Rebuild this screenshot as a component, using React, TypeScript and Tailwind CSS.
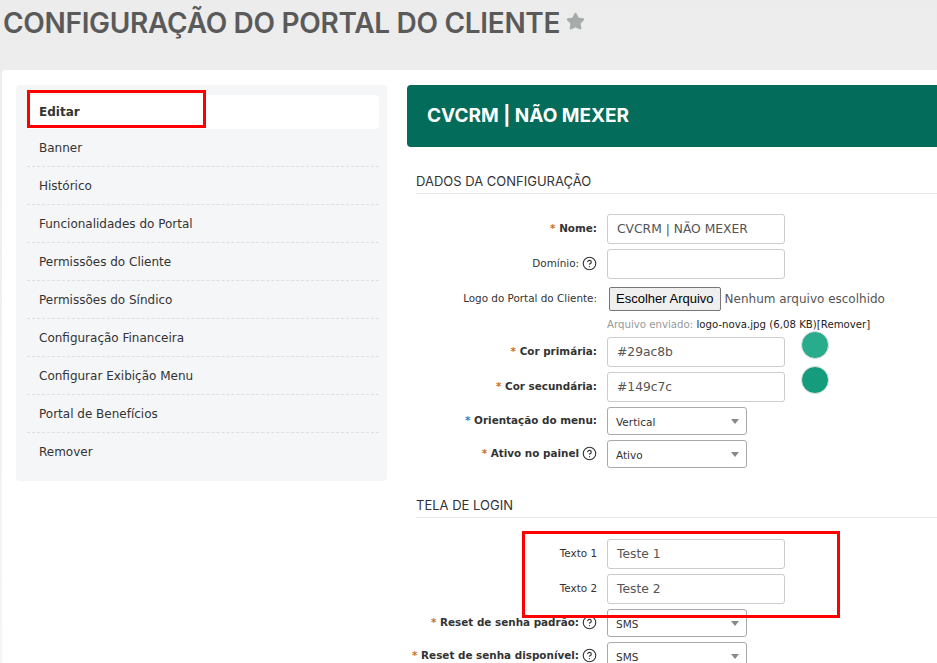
import { CircleHelp, Star } from "lucide-react";

const MENU = [
  "Banner",
  "Histórico",
  "Funcionalidades do Portal",
  "Permissões do Cliente",
  "Permissões do Síndico",
  "Configuração Financeira",
  "Configurar Exibição Menu",
  "Portal de Benefícios",
  "Remover",
];

const verdana = "font-['DejaVu_Sans',Verdana,sans-serif]";

function Req({ blue }: { blue?: boolean }) {
  return <span className={blue ? "text-[#3a7bd5]" : "text-[#c8702e]"}>* </span>;
}

function Help() {
  return <CircleHelp size={15} strokeWidth={1.8} className="ml-[3px] inline-block shrink-0 text-[#333]" />;
}

function Row({ label, children, className = "" }: { label: React.ReactNode; children: React.ReactNode; className?: string }) {
  return (
    <div className={`flex items-center ${className}`}>
      <div className={`flex w-[200px] shrink-0 items-center justify-end whitespace-nowrap pr-[10px] text-right text-[10.4px] text-[#333] ${verdana}`}>
        {label}
      </div>
      {children}
    </div>
  );
}

function TextInput({ value }: { value?: string }) {
  return (
    <div className={`flex h-[30px] w-[178px] items-center rounded-[3px] border border-[#ccc] bg-white px-[9px] text-[12.3px] text-[#555] ${verdana}`}>
      {value}
    </div>
  );
}

function Select({ value }: { value: string }) {
  return (
    <div className={`flex h-[28px] w-[140px] items-center justify-between rounded-[3px] border border-[#aaa] bg-white pl-[8px] pr-[7px] text-[10.5px] text-[#333] ${verdana}`}>
      <span className="pt-[3px]">{value}</span>
      <span className="h-0 w-0 border-l-[4px] border-r-[4px] border-t-[5px] border-l-transparent border-r-transparent border-t-[#888]" />
    </div>
  );
}

function SectionTitle({ children }: { children: React.ReactNode }) {
  return (
    <div className="ml-[9px] border-b border-[#e6e6e6] pb-[4px] font-['Inter',sans-serif] text-[13px] leading-[16px] text-[#333]">
      {children}
    </div>
  );
}

export default function App() {
  return (
    <div className="min-h-[663px] w-[937px] overflow-hidden bg-gradient-to-b from-[#ececec] to-[#f5f5f5]">
      <div className="flex h-[70px] items-start pl-[3px] pt-[2px]">
        <h1 className="font-['Inter',sans-serif] text-[28px] font-semibold tracking-[-0.3px] text-[#5a5a5a]">
          CONFIGURAÇÃO DO PORTAL DO CLIENTE
        </h1>
        <Star size={19} className="ml-[6px] mt-[10px] fill-[#a6abac] text-[#a6abac]" />
      </div>

      <div className="ml-[2px] flex min-h-[593px] gap-[20px] rounded-tl-[4px] bg-white pl-[14px] pt-[15px]">
        {/* Sidebar */}
        <div className="h-[396px] w-[371px] shrink-0 rounded-[4px] bg-[#f5f6f8] pl-[11px] pr-[8px] pt-[10px]">
          <div className={`relative flex h-[34px] items-center rounded-[4px] bg-white pl-[12px] text-[12px] font-bold text-[#333] ${verdana}`}>
            Editar
            <div className="absolute left-0 top-[-5px] h-[38px] w-[179px] border-[3px] border-[#ff0000]" />
          </div>
          {MENU.map((item, i) => (
            <div
              key={item}
              className={`flex h-[38px] items-center pl-[12px] text-[12px] text-[#333] ${verdana} ${i < MENU.length - 1 ? "border-b border-dashed border-[#dcdfe3]" : ""}`}
            >
              {item}
            </div>
          ))}
        </div>

        {/* Main */}
        <div className="flex-1">
          <div className="flex h-[62px] items-center rounded-l-[4px] bg-[#036c5b] pl-[20px] font-['Inter',sans-serif] text-[19px] font-bold text-white">
            CVCRM | NÃO MEXER
          </div>

          <div className="mt-[26px]">
            <SectionTitle>DADOS DA CONFIGURAÇÃO</SectionTitle>
          </div>

          <div className="mt-[20px] flex flex-col gap-[5px]">
            <Row label={<b><Req />Nome:</b>}>
              <TextInput value="CVCRM | NÃO MEXER" />
            </Row>
            <Row label={<>Domínio:<Help /></>}>
              <TextInput />
            </Row>
            <Row label="Logo do Portal do Cliente:" className="h-[30px]">
              <div className="ml-[2px] flex items-center font-['Liberation_Sans',Arial,sans-serif] text-[13px]">
                <span className="rounded-[2px] border border-[#767676] bg-[#efefef] px-[6px] py-[1px] text-black">Escolher Arquivo</span>
                <span className={`ml-[4px] text-[12px] text-[#555] ${verdana}`}>Nenhum arquivo escolhido</span>
              </div>
            </Row>
            <div className={`-mt-[2px] h-[15px] pl-[200px] text-[10.2px] ${verdana}`}>
              <span className="text-[#999]">Arquivo enviado: </span>
              <span className="text-[#222]">logo-nova.jpg (6,08 KB)[Remover]</span>
            </div>
            <Row label={<b><Req />Cor primária:</b>}>
              <TextInput value="#29ac8b" />
              <div className="-mt-[6px] ml-[16px] h-[28px] w-[28px] self-start rounded-full border border-[#ddd] bg-[#29ac8b]" />
            </Row>
            <Row label={<b><Req />Cor secundária:</b>}>
              <TextInput value="#149c7c" />
              <div className="-mt-[6px] ml-[16px] h-[28px] w-[28px] self-start rounded-full border border-[#ddd] bg-[#149c7c]" />
            </Row>
            <Row label={<b><Req blue />Orientação do menu:</b>}>
              <Select value="Vertical" />
            </Row>
            <Row label={<><b><Req />Ativo no painel</b><Help /></>}>
              <Select value="Ativo" />
            </Row>
          </div>

          <div className="mt-[29px]">
            <SectionTitle>TELA DE LOGIN</SectionTitle>
          </div>

          <div className="relative mt-[21px] flex flex-col gap-[5px]">
            <div className="absolute left-[115px] top-[-8px] h-[87px] w-[318px] border-[3px] border-[#ff0000]" />
            <Row label="Texto 1">
              <TextInput value="Teste 1" />
            </Row>
            <Row label="Texto 2">
              <TextInput value="Teste 2" />
            </Row>
            <Row label={<><b><Req />Reset de senha padrão:</b><Help /></>}>
              <Select value="SMS" />
            </Row>
            <Row label={<><b><Req />Reset de senha disponível:</b><Help /></>}>
              <Select value="SMS" />
            </Row>
          </div>
        </div>
      </div>
    </div>
  );
}
